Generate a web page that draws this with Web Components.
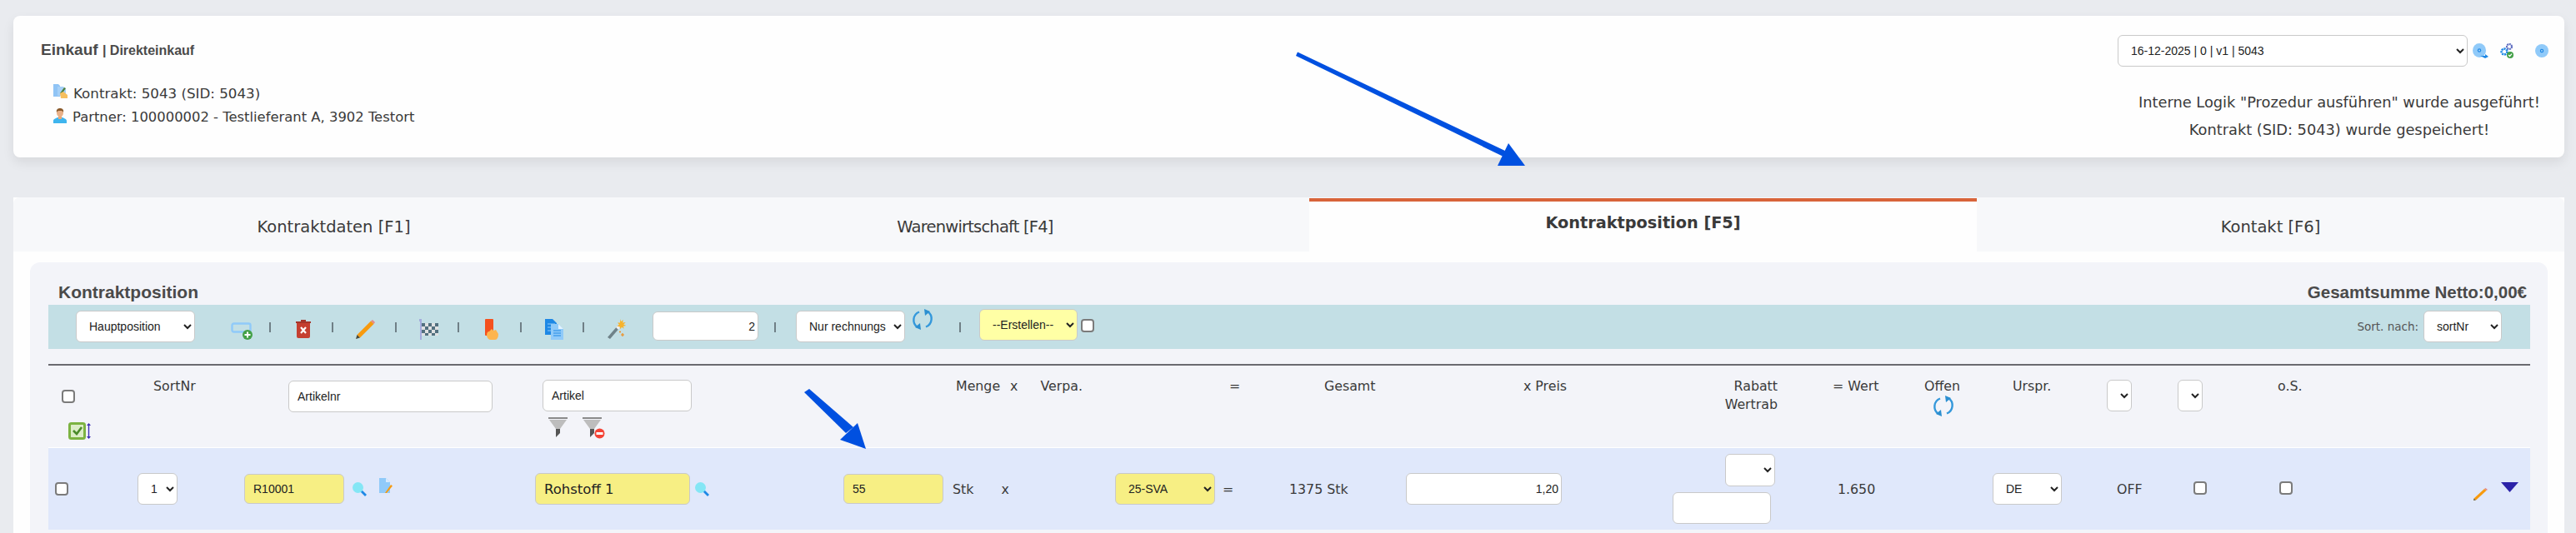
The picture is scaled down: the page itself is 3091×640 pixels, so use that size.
<!DOCTYPE html>
<html lang="de">
<head>
<meta charset="utf-8">
<title>Kontraktposition</title>
<style>
    html, body { margin: 0; height: 640px; overflow: hidden; background: #e9ebef; }
    body { font-family: "DejaVu Sans", sans-serif; color: #3a3a3a; position: relative; }
</style>
</head>
<body>
<page-root></page-root>
<script>
const ICONS = {
    contract: [18, 18, `<path d="M0 0h6l2 2v13H0z" fill="#90c4f5"/><path d="M5 3h7l3 3v8H5z" fill="#a6d0f7"/><path d="M13 4l2 1-5 7-2-1z" fill="#4f7f3a"/><path d="M8 11l4-2 5 4v4H9z" fill="#f6bf5f"/>`],
    person: [16, 18, `<path d="M0 18v-3c0-2 3-3 5-4h6c2 1 5 2 5 4v3z" fill="#3fb5ee"/><rect x="6" y="9" width="4" height="4" fill="#e8a877"/><ellipse cx="8" cy="5.5" rx="4" ry="5" fill="#eab188"/><path d="M4 5c-1-4 2-5 4-5s5 1 4 5c-1-2-2-2-4-2S5 3 4 5z" fill="#8a5a2b"/>`],
    discArrow: [19, 18, `<ellipse cx="8" cy="8.5" rx="8" ry="8.5" fill="#90caf9"/><circle cx="8" cy="8.5" r="2.2" fill="#1e88e5"/><circle cx="8" cy="8.5" r=".9" fill="#bbdefb"/><path d="M9 15h6v-2l4 3-4 2z" fill="#1e88e5"/>`],
    gears: [16, 18, `<circle cx="11" cy="4" r="3" fill="none" stroke="#5c6bc0" stroke-width="2.2" stroke-dasharray="2 .7"/><circle cx="5" cy="10" r="3.4" fill="none" stroke="#1e88e5" stroke-width="2.6" stroke-dasharray="2.2 .8"/><circle cx="12" cy="14" r="4" fill="#43a047"/><path d="M10 14l1.5 1.5L14 12.6" fill="none" stroke="#fff" stroke-width="1.2"/>`],
    disc: [16, 16, `<circle cx="8" cy="8" r="8" fill="#90caf9"/><circle cx="8" cy="8" r="2.2" fill="#1e88e5"/><circle cx="8" cy="8" r=".9" fill="#bbdefb"/>`],
    add: [27, 21, `<rect x="1.5" y="1.5" width="22" height="10" rx="2" fill="none" stroke="#90caf9" stroke-width="2.4"/><circle cx="20" cy="15" r="6" fill="#43a047"/><path d="M20 11.5v7M16.5 15h7" stroke="#fff" stroke-width="2"/>`],
    trash: [18, 23, `<path d="M0 3h18v2H0z" fill="#a5352a"/><path d="M6 1h6v2H6z" fill="#a5352a"/><path d="M1 5h16v16q0 2-2 2H3q-2 0-2-2z" fill="#c53f30"/><path d="M6 10l6 7M12 10l-6 7" stroke="#fff" stroke-width="2.2"/>`],
    pencil: [23, 23, `<path d="M18 1.5l3.5 3.5L5 21.5 1.5 18z" fill="#f79a0e"/><path d="M18 1.5l2-1.5 3 3-1.5 2z" fill="#e58a86"/><path d="M1.5 18l3.5 3.5L0 23z" fill="#4a4a3a"/>`],
    flag: [23, 25, `<rect x="1" y="1" width="2" height="24" fill="#a4abdc"/><rect x="0" y="0" width="3" height="3" fill="#a4abdc"/><rect x="3" y="5" width="20" height="15" fill="#dfe1e2"/><path d="M3 5h4v4H3zM11 5h4v4h-4zM19 5h4v4h-4zM7 9h4v4H7zM15 9h4v4h-4zM3 13h4v4H3zM11 13h4v4h-4zM19 13h4v4h-4zM7 17h4v3H7zM15 17h4v3h-4z" fill="#52707f"/>`],
    hand: [16, 25, `<rect x="0" y="0" width="10" height="20" rx="1" fill="#f4511e"/><path d="M2 20q0-5 3-5l3-3 2 2 3-1 3 5q0 3-1 5t-3 2H7q-4 0-5-5z" fill="#fdb54e"/>`],
    docs: [22, 25, `<path d="M0 0h9l5 5v14H0z" fill="#1e88e5"/><path d="M3 6h9M3 10h6M3 14h6" stroke="#90caf9"/><path d="M7 6h9l6 6v13H7z" fill="#90caf9"/><path d="M16 6l6 6h-6z" fill="#e3f2fd"/><path d="M10 14h9M10 17h9M10 20h9" stroke="#1e88e5"/>`],
    wand: [24, 25, `<path d="M1 22L14 7l3 2L4 24z" fill="#6f8289"/><path d="M11 10l3-3 3 2-3 4z" fill="#eceff1"/><path d="M16 0l1.2 3 2.6-2-.6 3.4 3.6-.4-2.6 2.5 3 1.5-3.4.8 1 3-2.8-2-1.6 2.4-.8-3-3-.4 2.4-2-2-2.4 3 .2z" fill="#f7b32b"/><path d="M17 19h4M19 17v4M15 15.5h2M16 14.5v2" stroke="#ef8e1e" stroke-width="1.2"/>`],
    refresh: [26, 25, `<path d="M7 22A10.5 10.5 0 0 1 9 3.5" fill="none" stroke="#3498db" stroke-width="2.4"/><path d="M19 3A10.5 10.5 0 0 1 17 21.5" fill="none" stroke="#3498db" stroke-width="2.4"/><path d="M15 0l7 3-6 5zM11 25l-7-3 6-5z" fill="#2c8fd0"/>`],
    lens: [17, 17, `<path d="M9 11l2-2 6 6-2 2z" fill="#1e88e5"/><circle cx="6.5" cy="6.5" r="6.5" fill="#84e6f5"/>`],
    docPen: [16, 18, `<path d="M0 0h8l5 5v13H0z" fill="#90caf9"/><path d="M8 0l5 5H8z" fill="#d6eafc"/><path d="M14 8l2 1.5L9 18l-2 0z" fill="#f79a0e"/>`],
    funnel: [24, 24, `<rect x="0" y="0" width="23" height="2" fill="#8a8a8a"/><path d="M1 3h21L14 14H9z" fill="#bdbdbd"/><path d="M9 14h5v5l-5 5z" fill="#555"/>`],
    funnelNo: [27, 26, `<rect x="0" y="0" width="23" height="2" fill="#8a8a8a"/><path d="M1 3h21L14 14H9z" fill="#bdbdbd"/><path d="M9 14h5v5l-5 5z" fill="#555"/><circle cx="20.5" cy="19.5" r="6" fill="#f44336"/><rect x="16.5" y="18" width="8" height="3" fill="#fff"/>`],
    checkAll: [28, 21, `<rect x="1.5" y="1.5" width="18" height="18" rx="2" fill="#dcedc8" stroke="#7cb342" stroke-width="3"/><path d="M6 10l4 4 6-8" fill="none" stroke="#4a8a2a" stroke-width="2.6"/><path d="M24.5 2v17" stroke="#3f2fb5" stroke-width="1.4"/><path d="M22 4l2.5-3L27 4zM22 17l2.5 3 2.5-3z" fill="#3f2fb5"/>`],
    pencilSmall: [17, 15, `<path d="M13 1l2.5 2L3 14.5.5 12.5z" fill="#f79a0e"/><path d="M13 1l1.5-1L17 2l-1.5 1z" fill="#e58a86"/><path d="M.5 12.5L3 14.5 0 15z" fill="#6a5a2a"/>`],
    triangle: [21, 12, `<path d="M0 0h21L10.5 12z" fill="#2b22a8"/>`]
};

class AppIcon extends HTMLElement {
    connectedCallback() {
        const [w, h, body] = ICONS[this.getAttribute('name')];
        this.attachShadow({ mode: 'open' });
        this.shadowRoot.innerHTML = `
            <style>
                :host { display: block; flex: none; line-height: 0; width: ${w}px; height: ${h}px; }
            </style>
            <svg width="${w}" height="${h}" viewBox="0 0 ${w} ${h}">${body}</svg>
        `;
    }
}

class UiSelect extends HTMLElement {
    connectedCallback() {
        const value = this.getAttribute('data-value') || '';
        this.attachShadow({ mode: 'open' });
        this.shadowRoot.innerHTML = `
            <style>
                :host { display: block; flex: none; height: 38px; }
                select {
                    width: 100%;
                    height: 100%;
                    box-sizing: border-box;
                    margin: 0;
                    padding: 0 0 0 11px;
                    font: 14px "Liberation Sans", Arial, sans-serif;
                    color: #222;
                    background-color: #fff;
                    border: 1px solid #c9c9c9;
                    border-radius: 6px;
                }
                :host([tone="yellow"]) select { background-color: #f7ef84; }
                :host([tone="pale"]) select { background-color: #ffffa5; }
            </style>
            <select><option>${value}</option></select>
        `;
    }
}

class UiInput extends HTMLElement {
    connectedCallback() {
        const value = this.getAttribute('data-value') || '';
        this.attachShadow({ mode: 'open' });
        this.shadowRoot.innerHTML = `
            <style>
                :host { display: block; flex: none; height: 38px; }
                input {
                    display: block;
                    width: 100%;
                    height: 100%;
                    box-sizing: border-box;
                    margin: 0;
                    padding: 0 10px;
                    font: 14px "Liberation Sans", Arial, sans-serif;
                    color: #222;
                    background: #fff;
                    border: 1px solid #c9c9c9;
                    border-radius: 6px;
                    outline: none;
                }
                :host([tone="yellow"]) input { background: #f7ef84; }
                :host([align="right"]) input { text-align: right; padding: 0 3px; }
                :host([big]) input { font: 16.5px "DejaVu Sans", sans-serif; }
            </style>
            <input type="text" value="${value}">
        `;
    }
}

class UiCheck extends HTMLElement {
    connectedCallback() {
        this.attachShadow({ mode: 'open' });
        this.shadowRoot.innerHTML = `
            <style>
                :host { display: block; flex: none; width: 16px; height: 16px; }
                input {
                    appearance: none;
                    display: block;
                    box-sizing: border-box;
                    width: 100%;
                    height: 100%;
                    margin: 0;
                    background: #fff;
                    border: 2px solid #7b7b7b;
                    border-radius: 4px;
                }
            </style>
            <input type="checkbox">
        `;
    }
}

class WhiteCard extends HTMLElement {
    connectedCallback() {
        this.attachShadow({ mode: 'open' });
        this.shadowRoot.innerHTML = `
            <style>
                :host {
                    display: flex;
                    justify-content: space-between;
                    height: 170px;
                    margin: 19px 14px 0 16px;
                    background: #fefefe;
                    border-radius: 8px;
                    box-shadow: 0 6px 14px rgba(0, 0, 0, 0.08);
                }
            </style>
            <slot name="left"></slot>
            <slot name="right"></slot>
        `;
    }
}

class ContractInfo extends HTMLElement {
    connectedCallback() {
        this.attachShadow({ mode: 'open' });
        this.shadowRoot.innerHTML = `
            <style>
                :host { display: block; padding: 31px 0 0 33px; color: #3a3a3a; }
                .title {
                    font: bold 19px/20px "Liberation Sans", Arial, sans-serif;
                    color: #4a4a4a;
                }
                .title small { font-size: 16px; }
                .line {
                    display: flex;
                    align-items: flex-end;
                    gap: 6px;
                    margin-left: 15px;
                    height: 29px;
                    font-size: 16.7px;
                    line-height: 22px;
                    white-space: nowrap;
                }
                .first { margin-top: 23px; }
                .first app-icon { margin-bottom: 4px; }
                .second { font-size: 16.4px; }
                .second app-icon { margin-bottom: 4px; width: 17px; }
            </style>
            <div class="title">Einkauf <small>| Direkteinkauf</small></div>
            <div class="line first"><app-icon name="contract"></app-icon><span>Kontrakt: 5043 (SID: 5043)</span></div>
            <div class="line second"><app-icon name="person"></app-icon><span>Partner: 100000002 - Testlieferant A, 3902 Testort</span></div>
        `;
    }
}

class VersionBox extends HTMLElement {
    connectedCallback() {
        this.attachShadow({ mode: 'open' });
        this.shadowRoot.innerHTML = `
            <style>
                :host { display: block; padding: 23px 21px 0 0; width: 536px; box-sizing: border-box; }
                .top { display: flex; align-items: center; }
                .top ui-select { width: 420px; }
                .top app-icon[name="discArrow"] { margin-left: 6px; }
                .top app-icon[name="gears"] { margin-left: 14px; }
                .top app-icon[name="disc"] { margin-left: 26px; }
                .msg {
                    margin: 26px 0 0 25px;
                    width: 482px;
                    text-align: center;
                    font-size: 17.8px;
                    line-height: 33px;
                    white-space: nowrap;
                }
            </style>
            <div class="top">
                <ui-select data-value="16-12-2025 | 0 | v1 | 5043"></ui-select>
                <app-icon name="discArrow"></app-icon>
                <app-icon name="gears"></app-icon>
                <app-icon name="disc"></app-icon>
            </div>
            <div class="msg">Interne Logik "Prozedur ausführen" wurde ausgeführt!<br>Kontrakt (SID: 5043) wurde gespeichert!</div>
        `;
    }
}

class TabBar extends HTMLElement {
    connectedCallback() {
        this.attachShadow({ mode: 'open' });
        this.shadowRoot.innerHTML = `
            <style>
                :host {
                    display: grid;
                    grid-template-columns: 769px 786px 801px 705px;
                    height: 65px;
                    background: #f7f8fa;
                    border-radius: 8px 8px 0 0;
                    overflow: hidden;
                }
            </style>
            <slot></slot>
        `;
    }
}

class TabItem extends HTMLElement {
    connectedCallback() {
        this.attachShadow({ mode: 'open' });
        this.shadowRoot.innerHTML = `
            <style>
                :host {
                    display: block;
                    box-sizing: border-box;
                    padding-top: 25px;
                    text-align: center;
                    font-size: 19.5px;
                    line-height: 22px;
                    color: #3a3a3a;
                }
                :host([active]) {
                    background: #fefefe;
                    border-top: 4px solid #d8643a;
                    margin-top: 1px;
                    padding-top: 15px;
                    font-size: 19.3px;
                    font-weight: bold;
                }
            </style>
            <slot></slot>
        `;
    }
}

class PosToolbar extends HTMLElement {
    connectedCallback() {
        this.attachShadow({ mode: 'open' });
        this.shadowRoot.innerHTML = `
            <style>
                :host {
                    display: flex;
                    align-items: flex-start;
                    height: 53px;
                    background: #c3dfe5;
                    color: #555;
                }
                ui-select { margin-top: 7px; }
                app-icon { margin-top: 17px; }
                .sep { flex: none; width: 2px; height: 12px; margin-top: 21px; background: #6f7f86; }
                .right { margin-left: auto; display: flex; align-items: center; margin-right: 34px; }
                .right span { font-size: 13.5px; margin-right: 6px; white-space: nowrap; }
            </style>
            <ui-select data-value="Hauptposition" style="margin-left:33px;width:143px"></ui-select>
            <app-icon name="add" style="margin-left:43px;margin-top:21px"></app-icon>
            <i class="sep" style="margin-left:19px"></i>
            <app-icon name="trash" style="margin-left:30px"></app-icon>
            <i class="sep" style="margin-left:25px"></i>
            <app-icon name="pencil" style="margin-left:27px;margin-top:18px"></app-icon>
            <i class="sep" style="margin-left:24px"></i>
            <app-icon name="flag" style="margin-left:27px"></app-icon>
            <i class="sep" style="margin-left:23px"></i>
            <app-icon name="hand" style="margin-left:31px"></app-icon>
            <i class="sep" style="margin-left:26px"></i>
            <app-icon name="docs" style="margin-left:28px"></app-icon>
            <i class="sep" style="margin-left:23px"></i>
            <app-icon name="wand" style="margin-left:27px"></app-icon>
            <ui-input data-value="2" align="right" style="margin-left:31px;margin-top:8px;width:127px;height:35px"></ui-input>
            <i class="sep" style="margin-left:19px"></i>
            <ui-select data-value="Nur rechnungs" style="margin-left:24px;width:131px"></ui-select>
            <app-icon name="refresh" style="margin-left:8px;margin-top:5px"></app-icon>
            <i class="sep" style="margin-left:31px"></i>
            <ui-select data-value="--Erstellen--" tone="pale" style="margin-left:22px;margin-top:5px;width:118px"></ui-select>
            <ui-check style="margin-left:4px;margin-top:17px"></ui-check>
            <div class="right" style="margin-top:7px">
                <span>Sort. nach:</span>
                <ui-select data-value="sortNr" style="margin-top:0;width:94px"></ui-select>
            </div>
        `;
    }
}

const COLUMNS = '107px 128px 349px 370px 326px 209px 140px 320px 133px 160px 91px 137px 85px 117px 230px 76px';

class PosHead extends HTMLElement {
    connectedCallback() {
        this.attachShadow({ mode: 'open' });
        this.shadowRoot.innerHTML = `
            <style>
                :host {
                    display: grid;
                    grid-template-columns: ${COLUMNS};
                    align-items: start;
                    height: 98px;
                    border-top: 2px solid #6a6a70;
                    font-size: 15.8px;
                    line-height: 22px;
                    white-space: nowrap;
                }
                .t { padding-top: 14px; }
                .flex { display: flex; }
                .r { text-align: right; padding-right: 7px; }
            </style>
            <div style="padding:29px 0 0 16px">
                <ui-check></ui-check>
                <app-icon name="checkAll" style="margin:23px 0 0 8px"></app-icon>
            </div>
            <div class="t" style="padding-left:19px">SortNr</div>
            <div style="padding:18px 0 0 53px"><ui-input data-value="Artikelnr" style="width:245px"></ui-input></div>
            <div style="padding:17px 0 0 9px">
                <ui-input data-value="Artikel" style="width:179px"></ui-input>
                <div class="flex" style="margin:7px 0 0 7px;gap:17px">
                    <app-icon name="funnel"></app-icon><app-icon name="funnelNo"></app-icon>
                </div>
            </div>
            <div class="t flex" style="padding-left:135px"><span>Menge</span><span style="margin-left:12px">x</span><span style="margin-left:27px">Verpa.</span></div>
            <div class="t" style="padding-left:137px">=</div>
            <div class="t" style="padding-left:42px">Gesamt</div>
            <div class="t" style="padding-left:141px">x Preis</div>
            <div class="t r">Rabatt<br>Wertrab</div>
            <div class="t" style="padding-left:59px">= Wert</div>
            <div class="t" style="padding-left:9px">Offen<app-icon name="refresh" style="margin:0 0 0 10px"></app-icon></div>
            <div class="t" style="padding-left:24px">Urspr.</div>
            <div style="padding-top:17px"><ui-select style="width:30px"></ui-select></div>
            <div style="padding-top:17px"><ui-select style="width:30px"></ui-select></div>
            <div class="t" style="padding-left:3px">o.S.</div>
            <div></div>
        `;
    }
}

class PosRow extends HTMLElement {
    connectedCallback() {
        this.attachShadow({ mode: 'open' });
        this.shadowRoot.innerHTML = `
            <style>
                :host {
                    display: grid;
                    grid-template-columns: ${COLUMNS};
                    align-items: center;
                    height: 99px;
                    background: #e0e8fb;
                    border-top: 1px solid #fff;
                    box-sizing: border-box;
                    font-size: 15.8px;
                    white-space: nowrap;
                }
                .flex { display: flex; align-items: center; }
            </style>
            <div style="padding-left:8px"><ui-check></ui-check></div>
            <div><ui-select data-value="1" style="width:48px"></ui-select></div>
            <div class="flex">
                <ui-input data-value="R10001" tone="yellow" style="width:120px;height:36px"></ui-input>
                <app-icon name="lens" style="margin-left:10px"></app-icon>
                <app-icon name="docPen" style="margin:-8px 0 0 15px"></app-icon>
            </div>
            <div class="flex">
                <ui-input data-value="Rohstoff 1" tone="yellow" big style="width:186px"></ui-input>
                <app-icon name="lens" style="margin-left:6px"></app-icon>
            </div>
            <div class="flex">
                <ui-input data-value="55" tone="yellow" style="width:120px;height:36px"></ui-input>
                <span style="margin-left:11px">Stk</span>
                <span style="margin-left:33px">x</span>
            </div>
            <div class="flex">
                <ui-select data-value="25-SVA" tone="yellow" style="width:120px"></ui-select>
                <span style="margin-left:9px">=</span>
            </div>
            <div>1375 Stk</div>
            <div><ui-input data-value="1,20" align="right" style="width:187px"></ui-input></div>
            <div>
                <ui-select style="width:60px;height:39px;margin-left:63px"></ui-select>
                <ui-input style="width:118px;margin-top:7px"></ui-input>
            </div>
            <div style="padding-left:65px">1.650</div>
            <div></div>
            <div><ui-select data-value="DE" style="width:83px"></ui-select></div>
            <div style="padding-left:12px">OFF</div>
            <div style="padding-left:19px"><ui-check style="margin-top:-2px"></ui-check></div>
            <div style="padding-left:5px"><ui-check style="margin-top:-2px"></ui-check></div>
            <div class="flex">
                <app-icon name="pencilSmall" style="margin:13px 0 0 8px"></app-icon>
                <app-icon name="triangle" style="margin:-4px 0 0 16px"></app-icon>
            </div>
        `;
    }
}

class PosPanel extends HTMLElement {
    connectedCallback() {
        this.attachShadow({ mode: 'open' });
        this.shadowRoot.innerHTML = `
            <style>
                :host {
                    display: block;
                    margin: 13px 20px 0 20px;
                    padding: 0 21px 0 22px;
                    height: 340px;
                    background: #f3f4f9;
                    border-radius: 12px 12px 0 0;
                }
                .head {
                    display: flex;
                    justify-content: space-between;
                    align-items: flex-end;
                    height: 51px;
                    padding: 0 4px 0 12px;
                    font: bold 21px/26px "Liberation Sans", Arial, sans-serif;
                    color: #4a4a4a;
                }
                .head div { padding-bottom: 2px; }
                .head .sum { font-size: 20.5px; }
                pos-head { margin-top: 18px; }
            </style>
            <div class="head"><div>Kontraktposition</div><div class="sum">Gesamtsumme Netto:0,00€</div></div>
            <pos-toolbar></pos-toolbar>
            <pos-head></pos-head>
            <pos-row></pos-row>
        `;
    }
}

class ArrowLayer extends HTMLElement {
    connectedCallback() {
        this.attachShadow({ mode: 'open' });
        this.shadowRoot.innerHTML = `
            <style>
                :host { position: absolute; left: 0; top: 0; width: 3091px; height: 640px; pointer-events: none; }
            </style>
            <svg width="3091" height="640">
                <path d="M1557 62.5L1555 67 1805 188.5 1808 182z" fill="#0050e0"/>
                <path d="M1810 172L1797 199 1830 199z" fill="#0050e0"/>
                <path d="M971 467L965 471 1015 520 1024 513z" fill="#0050e0"/>
                <path d="M1029 508L1008 528 1039 539z" fill="#0050e0"/>
            </svg>
        `;
    }
}

class PageRoot extends HTMLElement {
    connectedCallback() {
        this.attachShadow({ mode: 'open' });
        this.shadowRoot.innerHTML = `
            <style>
                :host { display: block; }
                .lower { margin: 48px 14px 0 16px; background: #fefefe; }
            </style>
            <white-card>
                <contract-info slot="left"></contract-info>
                <version-box slot="right"></version-box>
            </white-card>
            <div class="lower">
                <tab-bar>
                    <tab-item>Kontraktdaten [F1]</tab-item>
                    <tab-item style="padding-right:16px;letter-spacing:-0.8px">Warenwirtschaft [F4]</tab-item>
                    <tab-item active>Kontraktposition [F5]</tab-item>
                    <tab-item>Kontakt [F6]</tab-item>
                </tab-bar>
                <pos-panel></pos-panel>
            </div>
            <arrow-layer></arrow-layer>
        `;
    }
}

customElements.define('app-icon', AppIcon);
customElements.define('ui-select', UiSelect);
customElements.define('ui-input', UiInput);
customElements.define('ui-check', UiCheck);
customElements.define('white-card', WhiteCard);
customElements.define('contract-info', ContractInfo);
customElements.define('version-box', VersionBox);
customElements.define('tab-bar', TabBar);
customElements.define('tab-item', TabItem);
customElements.define('pos-toolbar', PosToolbar);
customElements.define('pos-head', PosHead);
customElements.define('pos-row', PosRow);
customElements.define('pos-panel', PosPanel);
customElements.define('arrow-layer', ArrowLayer);
customElements.define('page-root', PageRoot);
</script>
</body>
</html>
